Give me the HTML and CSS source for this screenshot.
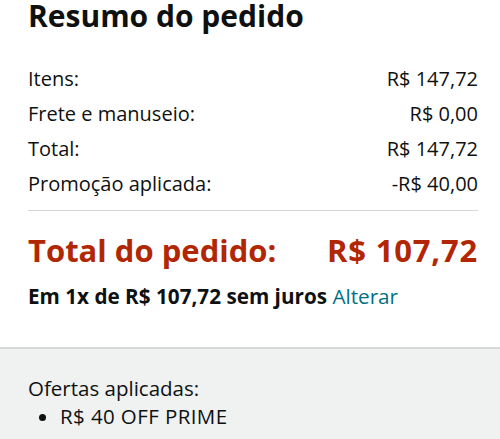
FILE: index.html
```html
<!DOCTYPE html>
<html lang="pt-BR">
<head>
    <meta charset="UTF-8">
    <meta name="viewport" content="width=device-width, initial-scale=1.0">
    <title>Resumo do pedido</title>
    <link rel="stylesheet" href="styles.css">
</head>
<body>

    <!-- Order summary -->
    <div class="summary">
        <h1>Resumo do pedido</h1>

        <div class="lines">
            <div class="line"><span>Itens:</span><span>R$ 147,72</span></div>
            <div class="line"><span>Frete e manuseio:</span><span>R$ 0,00</span></div>
            <div class="line"><span>Total:</span><span>R$ 147,72</span></div>
            <div class="line"><span>Promoção aplicada:</span><span>-R$ 40,00</span></div>
        </div>

        <div class="grand-total">
            <span>Total do pedido:</span>
            <span class="amount">R$ 107,72</span>
        </div>

        <p class="installments">
            <strong>Em 1x de R$ 107,72 sem juros</strong> <a href="#">Alterar</a>
        </p>
    </div>

    <!-- Applied offers -->
    <div class="offers">
        <p>Ofertas aplicadas:</p>
        <ul>
            <li>R$ 40 OFF PRIME</li>
        </ul>
    </div>

</body>
</html>
```

FILE: styles.css
```css
/* General page styling */
body {
    font-family: 'Open Sans', 'Noto Sans', sans-serif;
    margin: 0;
    padding: 0;
    background: #fff;
    color: #0f1111;
}

/* Summary box */
.summary {
    padding: 0 22px 0 28px;
}

.summary h1 {
    margin: 0;
    font-size: 30px;
    font-weight: bold;
    line-height: 32px;
}

.lines {
    margin-top: 29px;
    padding-bottom: 9px;
    border-bottom: 1px solid #d5d9d9;
}

.line {
    display: flex;
    justify-content: space-between;
    font-size: 20px;
    line-height: 35px;
}

/* Grand total */
.grand-total {
    display: flex;
    justify-content: space-between;
    margin-top: 19px;
    font-size: 31px;
    font-weight: bold;
    line-height: 40px;
    color: #b12704;
}

.grand-total .amount {
    letter-spacing: 0.8px;
}

.installments {
    margin: 13px 0 0;
    font-size: 20.7px;
    line-height: 26px;
}

.installments a {
    color: #007185;
    text-decoration: none;
}

/* Applied offers */
.offers {
    margin-top: 38px;
    padding: 25px 28px 10px;
    background-color: #f0f2f2;
    border-top: 2px solid #d5d9d9;
    font-size: 20.5px;
    line-height: 28px;
}

.offers p {
    margin: 0;
}

.offers ul {
    margin: 0;
    padding-left: 32px;
}

.offers li {
    letter-spacing: 0.4px;
}
```
